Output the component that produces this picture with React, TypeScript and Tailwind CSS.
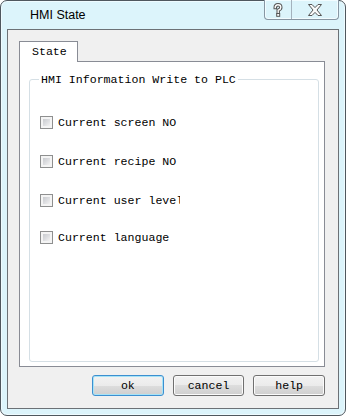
import React from "react";

const mono = { fontFamily: '"Liberation Mono", "DejaVu Sans Mono", monospace' };

function CheckRow({ label, mt, clip }: { label: string; mt: string; clip?: boolean }) {
  return (
    <div className={`flex items-center gap-[5px] h-[13px] ${mt}`}>
      <div className="w-[13px] h-[13px] border border-[#8e8f8f] bg-[#f4f4f4] p-[2px] shrink-0">
        <div className="w-full h-full bg-[linear-gradient(135deg,#c9cbcf_0%,#dcdde0_50%,#f3f3f3_100%)]" />
      </div>
      <span
        className={`text-[11.6px] leading-[13px] text-black whitespace-nowrap ${clip ? "w-[122px] overflow-hidden" : ""}`}
        style={mono}
      >
        {label}
      </span>
    </div>
  );
}

function Btn({ label, primary }: { label: string; primary?: boolean }) {
  return (
    <div
      className={`w-[72px] h-[21px] rounded-[3px] border flex items-center justify-center bg-[linear-gradient(to_bottom,#f2f2f2_0%,#ebebeb_50%,#dddddd_50%,#cfcfcf_100%)] ${
        primary ? "border-[#3c8fd0] shadow-[inset_0_0_0_1px_#a6e3f7]" : "border-[#707070] shadow-[inset_0_0_0_1px_#fbfbfb]"
      }`}
    >
      <span className="text-[11.6px] leading-[13px] text-black" style={mono}>
        {label}
      </span>
    </div>
  );
}

export default function App() {
  return (
    <div className="w-[346px] h-[416px] bg-white">
      <div className="relative w-[346px] h-[416px] rounded-[7px] border border-[#4f575e] bg-[#dcf4fb] flex flex-col shadow-[inset_0_0_0_1px_#eefbff]">
        {/* title bar */}
        <div className="h-[28px] flex items-center pl-[29px] pt-[1px]">
          <span
            className="text-[12.5px] text-black"
            style={{ fontFamily: '"Liberation Sans", Arial, sans-serif' }}
          >
            HMI State
          </span>
        </div>
        {/* caption buttons */}
        <div className="absolute top-[-1px] right-[6px] h-[20px] flex rounded-b-[4px] border border-t-0 border-[#8796a3] bg-[#dcf4fb] shadow-[inset_0_0_0_1px_#f2fcff] overflow-hidden">
          <div className="w-[27px] h-full flex items-center justify-center border-r border-[#a4b2bd]">
            <svg width="10" height="14" viewBox="0 0 10 14">
              <path d="M2.2 4.6 Q2.2 1.8 5 1.8 Q7.8 1.8 7.8 4.4 Q7.8 6.2 5.2 7.2 L5.2 9.2" fill="none" stroke="#555" strokeWidth="3.4" strokeLinecap="square" />
              <path d="M2.2 4.6 Q2.2 1.8 5 1.8 Q7.8 1.8 7.8 4.4 Q7.8 6.2 5.2 7.2 L5.2 9.2" fill="none" stroke="#fafafa" strokeWidth="1.4" strokeLinecap="square" />
              <rect x="3.7" y="10.5" width="3" height="2.8" fill="#fafafa" stroke="#555" strokeWidth="1" />
            </svg>
          </div>
          <div className="w-[46px] h-full flex items-center justify-center">
            <svg width="14" height="12" viewBox="0 0 14 12">
              <polygon
                points="0.5,0.5 4,0.5 7,3.6 10,0.5 13.5,0.5 9,6 13.5,11.5 10,11.5 7,8.4 4,11.5 0.5,11.5 5,6"
                fill="#fafafa"
                stroke="#555"
                strokeWidth="1"
                strokeLinejoin="round"
              />
            </svg>
          </div>
        </div>
        {/* client area */}
        <div className="flex-1 mx-[6px] mb-[6px] border border-[#6c7176] bg-[#f0f0f0] pt-[11px] pl-[11px] pr-[13px] flex flex-col">
          {/* tab strip */}
          <div className="h-[20px] flex items-start">
            <div className="relative z-10 w-[59px] h-[21px] border border-b-0 border-[#898c95] bg-white flex items-center pl-[12px] pb-[1px]">
              <span className="text-[11.6px] leading-[13px] text-black" style={mono}>
                State
              </span>
            </div>
          </div>
          {/* tab panel */}
          <div className="h-[306px] border border-[#898c95] bg-white pl-[9px] pr-[5px] pt-[10px]">
            <fieldset className="h-[290px] rounded-[3px] border border-[#d5dfe5] pl-[10px]">
              <legend className="ml-[-1px] px-[2px] text-[11.6px] leading-[14px] text-black pt-[1px]" style={mono}>
                HMI Information Write to PLC
              </legend>
              <CheckRow label="Current screen NO" mt="mt-[29px]" />
              <CheckRow label="Current recipe NO" mt="mt-[26px]" />
              <CheckRow label="Current user level" mt="mt-[26px]" clip />
              <CheckRow label="Current language" mt="mt-[24px]" />
            </fieldset>
          </div>
          {/* buttons */}
          <div className="mt-[8px] flex gap-[9px] pl-[73px]">
            <Btn label="ok" primary />
            <Btn label="cancel" />
            <Btn label="help" />
          </div>
        </div>
      </div>
    </div>
  );
}
